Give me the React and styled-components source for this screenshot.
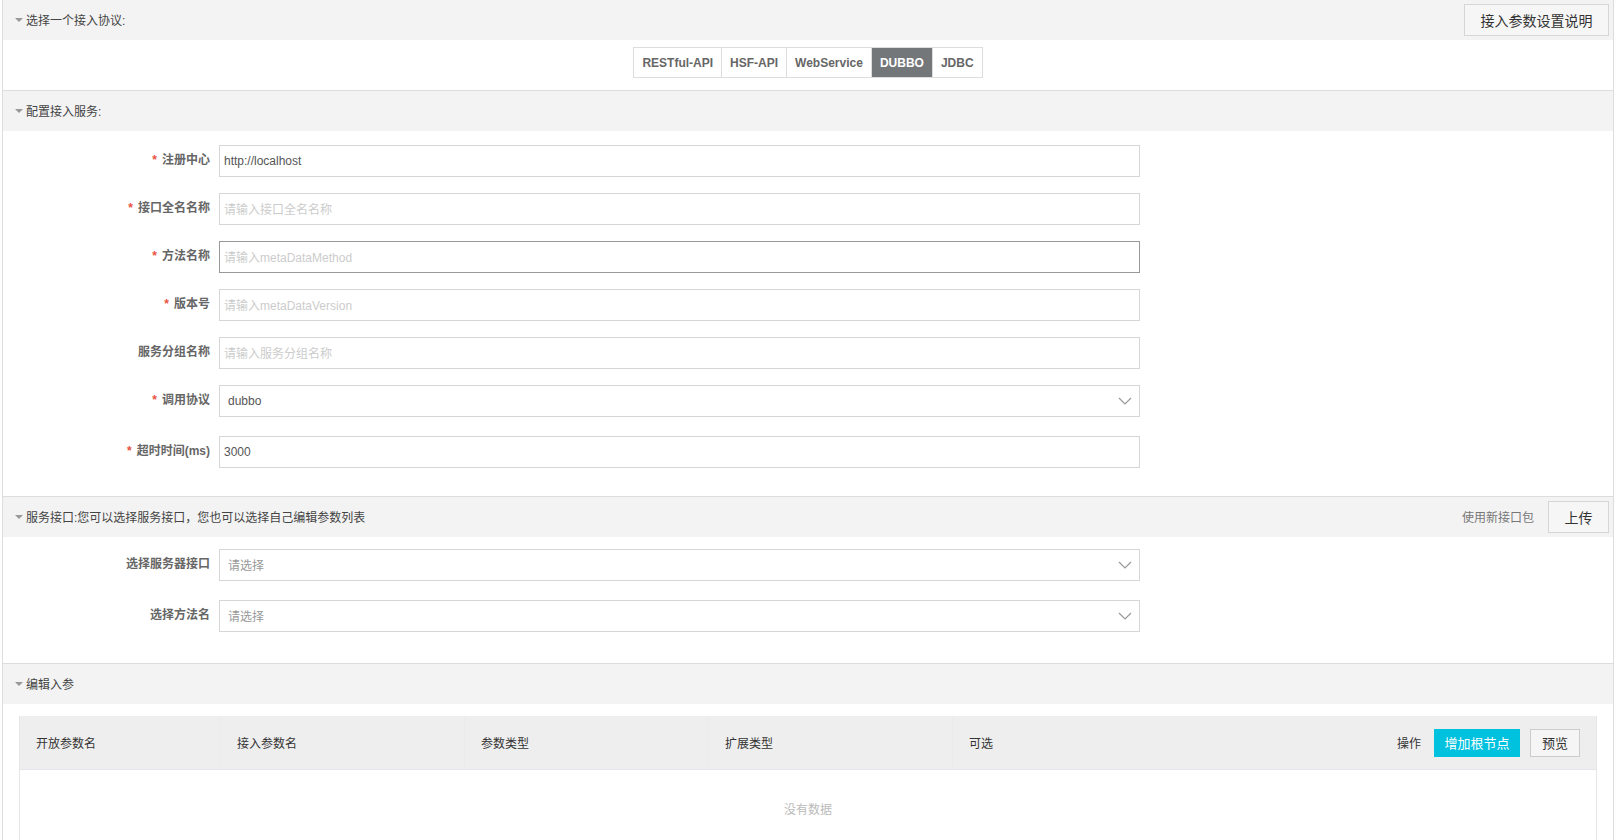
import React from 'react';
import styled, { createGlobalStyle } from 'styled-components';

const GlobalStyle = createGlobalStyle`
  html, body {
    margin: 0;
    padding: 0;
    background: #fff;
    font-family: "Liberation Sans", "Noto Sans CJK SC", sans-serif;
    font-size: 12px;
    color: #333;
  }
  * { box-sizing: border-box; }
`;

const protocols = ['RESTful-API', 'HSF-API', 'WebService', 'DUBBO', 'JDBC'];

const serviceFields = [
  { label: '注册中心', required: true, value: 'http://localhost' },
  { label: '接口全名名称', required: true, placeholder: '请输入接口全名名称' },
  { label: '方法名称', required: true, placeholder: '请输入metaDataMethod', focused: true },
  { label: '版本号', required: true, placeholder: '请输入metaDataVersion' },
  { label: '服务分组名称', placeholder: '请输入服务分组名称' },
  { label: '调用协议', required: true, value: 'dubbo', select: true },
  { label: '超时时间(ms)', required: true, value: '3000', gap: 19 },
];

const columns = [
  { title: '开放参数名', width: 200 },
  { title: '接入参数名', width: 244 },
  { title: '参数类型', width: 244 },
  { title: '扩展类型', width: 244 },
  { title: '可选', width: 244 },
];

const Chevron = () => (
  <svg width="14" height="8" viewBox="0 0 14 8">
    <path d="M1 1l6 6 6-6" fill="none" stroke="#999" strokeWidth="1.2" />
  </svg>
);

const Field = ({ label, required, value, placeholder, select, focused, gap }) => (
  <Row $gap={gap}>
    <Label>
      {required && <Star>*</Star>}
      {label}
    </Label>
    <Input $focused={focused} $select={select}>
      {value ? <Value>{value}</Value> : <Placeholder $select={select}>{placeholder}</Placeholder>}
      {select && <Arrow><Chevron /></Arrow>}
    </Input>
  </Row>
);

export default function App() {
  return (
    <Page>
      <GlobalStyle />
      <Section>
        <Header $first>
          <Title>选择一个接入协议:</Title>
          <HeaderButton>接入参数设置说明</HeaderButton>
        </Header>
        <TabBody>
          <Tabs>
            {protocols.map(p => (
              <Tab key={p} $active={p === 'DUBBO'}>{p}</Tab>
            ))}
          </Tabs>
        </TabBody>
      </Section>

      <Section>
        <Header>
          <Title>配置接入服务:</Title>
        </Header>
        <FormBody $top={14} $bottom={28}>
          {serviceFields.map(f => (
            <Field key={f.label} {...f} />
          ))}
        </FormBody>
      </Section>

      <Section>
        <Header>
          <Title>服务接口:您可以选择服务接口，您也可以选择自己编辑参数列表</Title>
          <HeaderTools>
            <HeaderHint>使用新接口包</HeaderHint>
            <UploadButton>上传</UploadButton>
          </HeaderTools>
        </Header>
        <FormBody $top={12} $bottom={31}>
          <Field label="选择服务器接口" placeholder="请选择" select />
          <Field label="选择方法名" placeholder="请选择" select gap={19} />
        </FormBody>
      </Section>

      <Section>
        <Header>
          <Title>编辑入参</Title>
        </Header>
        <TableWrap>
          <Table>
            <THead>
              {columns.map(c => (
                <Th key={c.title} style={{ width: c.width }}>{c.title}</Th>
              ))}
              <ActionCell>
                <span>操作</span>
                <PrimaryButton>增加根节点</PrimaryButton>
                <GhostButton>预览</GhostButton>
              </ActionCell>
            </THead>
            <Empty>没有数据</Empty>
          </Table>
        </TableWrap>
      </Section>
    </Page>
  );
}

const Page = styled.div`
  margin: 0 1px 0 2px;
  border-left: 1px solid #ddd;
  border-right: 1px solid #ddd;
  min-height: 840px;
`;

const Section = styled.div``;

const Header = styled.div`
  height: ${p => (p.$first ? 40 : 41)}px;
  background: #f3f3f3;
  border-top: ${p => (p.$first ? 'none' : '1px solid #ddd')};
  display: flex;
  align-items: center;
  justify-content: space-between;
  padding: 0 4px 1px 12px;
`;

const Title = styled.div`
  display: flex;
  align-items: center;
  font-size: 12px;
  color: #444;

  &::before {
    content: '';
    width: 0;
    height: 0;
    border-left: 4px solid transparent;
    border-right: 4px solid transparent;
    border-top: 4px solid #999;
    margin-right: 3px;
  }
`;

const HeaderButton = styled.button`
  height: 32px;
  width: 145px;
  border: 1px solid #d6d6d6;
  background: #f6f6f6;
  color: #333;
  font-family: inherit;
  font-size: 14px;
  padding: 0;
`;

const HeaderTools = styled.div`
  display: flex;
  align-items: center;
  gap: 14px;
`;

const HeaderHint = styled.span`
  font-size: 12px;
  color: #777;
`;

const UploadButton = styled(HeaderButton)`
  width: 61px;
`;

const TabBody = styled.div`
  height: 50px;
  display: flex;
  justify-content: center;
  padding-top: 7px;
`;

const Tabs = styled.div`
  display: flex;
  height: 31px;
  border: 1px solid #ddd;
`;

const Tab = styled.div`
  display: flex;
  align-items: center;
  padding: 0 8px;
  font-weight: bold;
  font-size: 12px;
  color: ${p => (p.$active ? '#fff' : '#666')};
  background: ${p => (p.$active ? '#73777a' : '#fff')};
  border-left: 1px solid #ddd;

  &:first-child {
    border-left: none;
  }
`;

const FormBody = styled.div`
  padding: ${p => p.$top}px 0 ${p => p.$bottom}px;
  display: flex;
  flex-direction: column;
`;

const Row = styled.div`
  display: flex;
  align-items: flex-start;
  margin-top: ${p => (p.$gap ? p.$gap : 16)}px;

  &:first-child {
    margin-top: 0;
  }
`;

const Label = styled.div`
  width: 216px;
  padding-right: 9px;
  padding-top: 5px;
  text-align: right;
  font-weight: bold;
  font-size: 12px;
  color: #666;
`;

const Star = styled.span`
  color: #e8523f;
  margin-right: 5px;
`;

const Input = styled.div`
  position: relative;
  width: 921px;
  height: 32px;
  border: 1px solid ${p => (p.$focused ? '#999' : '#d6d6d6')};
  display: flex;
  align-items: center;
  padding: 0 ${p => (p.$select ? 8 : 4)}px 1px;
  font-size: 12px;
`;

const Value = styled.span`
  color: #555;
`;

const Placeholder = styled.span`
  color: ${p => (p.$select ? '#999' : '#ccc')};
`;

const Arrow = styled.span`
  position: absolute;
  right: 7px;
  top: 11px;
  display: flex;
`;

const TableWrap = styled.div`
  padding: 12px 16px 0 16px;
`;

const Table = styled.div`
  border-left: 1px solid #e6e6e6;
  border-right: 1px solid #e6e6e6;
`;

const THead = styled.div`
  display: flex;
  align-items: center;
  height: 54px;
  background: #eee;
  border-bottom: 1px solid #e3e6ea;
`;

const Th = styled.div`
  height: 100%;
  display: flex;
  align-items: center;
  padding-left: 16px;
  font-size: 12px;
  color: #333;
  border-left: 1px solid #ebebeb;

  &:first-child {
    border-left: none;
  }
`;

const ActionCell = styled.div`
  flex: 1;
  display: flex;
  align-items: center;
  justify-content: flex-end;
  padding-right: 16px;
  font-size: 12px;
  color: #333;

  span {
    margin-right: 13px;
  }
`;

const PrimaryButton = styled.button`
  width: 86px;
  height: 28px;
  border: none;
  background: #00c1de;
  color: #fff;
  font-family: inherit;
  font-size: 13px;
  padding: 0;
`;

const GhostButton = styled.button`
  width: 50px;
  height: 28px;
  margin-left: 10px;
  border: 1px solid #ccc;
  background: #f5f5f5;
  color: #333;
  font-family: inherit;
  font-size: 13px;
  padding: 0;
`;

const Empty = styled.div`
  height: 90px;
  padding-top: 30px;
  text-align: center;
  font-size: 12px;
  color: #bbb;
`;
